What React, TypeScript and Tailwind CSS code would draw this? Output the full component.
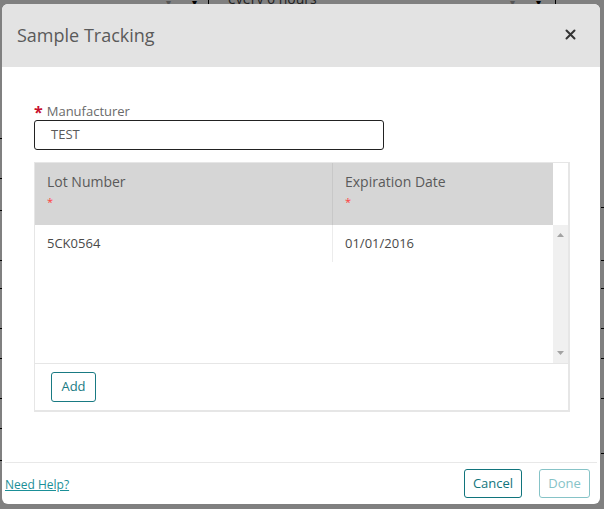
import React from "react";

const font = { fontFamily: '"Open Sans", "Noto Sans", sans-serif' };

const BackgroundTicks = () => (
  <>
    <div className="absolute left-0 top-0 h-[4px] w-[604px] overflow-hidden">
      <div className="absolute left-[208px] top-0 h-[4px] w-px bg-black" />
      <div className="absolute left-[228px] top-[-12px] text-[14px] text-[#222]">every 6 hours</div>
      <div className="absolute left-[555px] top-0 h-[4px] w-px bg-black" />
      <div className="absolute left-[166px] top-0 text-[10px] leading-[4px] text-[#555]">▾</div>
      <div className="absolute left-[192px] top-0 text-[10px] leading-[4px] text-black">▾</div>
      <div className="absolute left-[510px] top-0 text-[10px] leading-[4px] text-[#555]">▾</div>
      <div className="absolute left-[536px] top-0 text-[10px] leading-[4px] text-black">▾</div>
    </div>
    {[138, 178, 210, 260, 288, 328, 358, 398, 428, 460].map((y) => (
      <div key={"l" + y} className="absolute left-0 h-px w-[2px] bg-black" style={{ top: y }} />
    ))}
    {[207, 260, 288, 328, 358, 398, 453].map((y) => (
      <div key={"r" + y} className="absolute right-0 h-px w-[3px] bg-black" style={{ top: y }} />
    ))}
  </>
);

const Asterisk = () => <span className="mt-[4px] text-[11px] leading-none text-[#ff3b3b]">*</span>;

export default function App() {
  return (
    <div className="relative h-[509px] w-[604px] overflow-hidden bg-[#808080] pl-[2px] pt-[4px]" style={font}>
      <BackgroundTicks />
      <div className="relative flex h-[500px] w-[598px] flex-col overflow-hidden rounded-[6px] bg-white">
        <div className="flex h-[63px] shrink-0 items-center justify-between bg-[#e3e3e3] pl-[15px] pr-[24px]">
          <span className="text-[18px] text-[#5a5a5a]">Sample Tracking</span>
          <svg width="11" height="11" viewBox="0 0 11 11" className="mt-[-2px]">
            <path d="M1.5 1.5 L9.5 9.5 M9.5 1.5 L1.5 9.5" stroke="#333" strokeWidth="2" strokeLinecap="round" />
          </svg>
        </div>

        <div className="flex-1 px-[32px] pt-[34px]">
          <div className="flex items-center gap-[4px] text-[13px] leading-[16px] text-[#6a6a6a]">
            <span className="mt-[3px] text-[16px] font-bold leading-none text-[#c8102e]">*</span>
            <span>Manufacturer</span>
          </div>
          <div className="flex h-[30px] w-[350px] items-center rounded-[3px] border border-[#222] pl-[16px] text-[13px] text-[#5a5a5a]">
            TEST
          </div>

          <div className="mt-[12px] w-[536px] border-b-2 border-l border-r-2 border-t border-[#e6e6e6]">
            <div className="flex">
              <div className="flex w-[518px] bg-[#d6d6d6]">
                <div className="flex h-[62px] w-[298px] flex-col border-r border-[#c8c8c8] pl-[12px] pt-[9px] text-[14px] text-[#5a5a5a]">
                  <span className="leading-[20px]">Lot Number</span>
                  <Asterisk />
                </div>
                <div className="flex h-[62px] flex-1 flex-col pl-[12px] pt-[9px] text-[14px] text-[#5a5a5a]">
                  <span className="leading-[20px]">Expiration Date</span>
                  <Asterisk />
                </div>
              </div>
              <div className="flex-1 bg-white" />
            </div>
            <div className="flex h-[139px] border-b border-[#e6e6e6]">
              <div className="flex w-[518px] items-start">
                <div className="flex h-[37px] w-[298px] items-center border-r border-[#ececec] pl-[12px] text-[13px] text-[#4a4a4a]">
                  5CK0564
                </div>
                <div className="flex h-[37px] flex-1 items-center pl-[12px] text-[13px] text-[#4a4a4a]">01/01/2016</div>
              </div>
              <div className="flex flex-1 flex-col items-center justify-between bg-[#f0f0f0] pb-[8px] pt-[8px]">
                <svg width="7" height="4" viewBox="0 0 7 4">
                  <path d="M0 4 L3.5 0 L7 4 Z" fill="#a3a3a3" />
                </svg>
                <svg width="7" height="4" viewBox="0 0 7 4">
                  <path d="M0 0 L3.5 4 L7 0 Z" fill="#a3a3a3" />
                </svg>
              </div>
            </div>
            <div className="flex h-[46px] items-center pl-[16px]">
              <button className="flex h-[30px] w-[45px] items-center justify-center rounded-[3px] border border-[#197a83] text-[13px] text-[#197a83]">
                Add
              </button>
            </div>
          </div>
        </div>

        <div className="mx-[3px] flex h-[42px] shrink-0 items-center justify-between border-t border-[#e8e8e8] pr-[7px]">
          <a className="mt-[2px] text-[12px] text-[#1a8f97] underline">Need Help?</a>
          <div className="flex gap-[17px]">
            <button className="flex h-[29px] w-[58px] items-center justify-center rounded-[3px] border border-[#10747c] text-[13px] text-[#10747c]">
              Cancel
            </button>
            <button className="flex h-[29px] w-[51px] items-center justify-center rounded-[3px] border border-[#86c3c7] text-[13px] text-[#86c3c7]">
              Done
            </button>
          </div>
        </div>
      </div>
    </div>
  );
}
